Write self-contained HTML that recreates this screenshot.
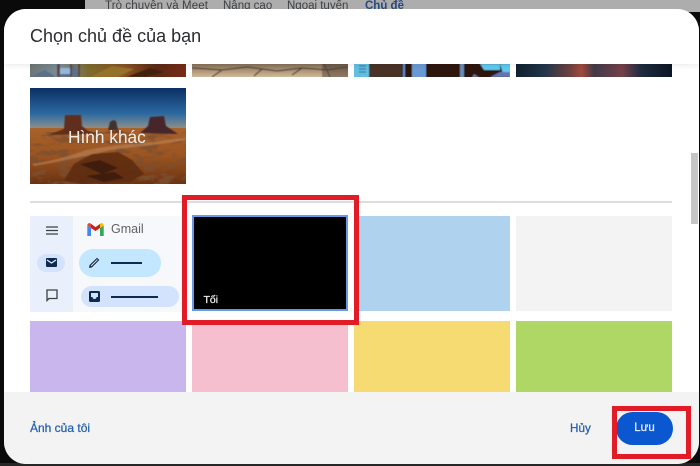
<!DOCTYPE html>
<html lang="vi">
<head>
<meta charset="utf-8">
<title>Chọn chủ đề của bạn</title>
<style>
html,body{margin:0;padding:0}
body{width:700px;height:466px;position:relative;overflow:hidden;background:#0a0a0a;font-family:"Liberation Sans","Noto Sans CJK JP",sans-serif}
div,span,svg{position:absolute;display:block}
.t{white-space:nowrap}
.m{-webkit-text-stroke:.25px currentColor}
</style>
</head>
<body>
<div style="left:85px;top:0;width:615px;height:12px;background:#adadad"></div>
<div class="t" style="left:105px;top:-1px;font-size:11.500px;line-height:14px;color:#3d4043;letter-spacing:.1px">Trò chuyện và Meet</div>
<div class="t" style="left:223px;top:-1px;font-size:11.500px;line-height:14px;color:#3d4043">Nâng cao</div>
<div class="t" style="left:287px;top:-1px;font-size:11.500px;line-height:14px;color:#3d4043">Ngoại tuyến</div>
<div class="t" style="left:365px;top:-1px;font-size:11.500px;line-height:14px;color:#28497c;font-weight:bold">Chủ đề</div>
<div style="left:0;top:463px;width:700px;height:3px;background:#262626"></div>

<!-- dialog -->
<div style="left:4px;top:9px;width:695px;height:455px;background:#fff;border-radius:22px;overflow:hidden">
  <svg style="left:26px;top:55px" width="156" height="13" viewBox="0 0 156 13">
    <defs>
      <linearGradient id="a" x1="0" x2="1" y1="0" y2="0"><stop offset="0" stop-color="#6b7470"/><stop offset=".2" stop-color="#7c8d9a"/><stop offset=".38" stop-color="#7d6a2c"/><stop offset=".6" stop-color="#8a5424"/><stop offset=".8" stop-color="#5a2a14"/><stop offset="1" stop-color="#7a2d18"/></linearGradient>
      <filter id="b1"><feGaussianBlur stdDeviation=".6"/></filter>
    </defs>
    <g filter="url(#b1)">
      <rect x="-2" y="-2" width="160" height="17" fill="url(#a)"/>
      <path d="M0 13L15 6 26 13ZM28 13L44 0 50 13Z" fill="#5a6f88"/>
      <path d="M27 0h3v13h-3zM40 0h2v13h-2zM48 0h2v13h-2z" fill="#5b4a45"/>
      <path d="M30 4h10v6H30z" fill="#94b8dc"/>
      <path d="M60 13L82 2 104 5 88 13Z" fill="#94722c"/>
      <path d="M96 13L120 4 134 8 116 13Z" fill="#42200f"/>
    </g>
  </svg>
  <svg style="left:188px;top:55px" width="156" height="13" viewBox="0 0 156 13">
    <defs>
      <linearGradient id="bb" x1="0" x2="0" y1="0" y2="1"><stop offset="0" stop-color="#7a6650"/><stop offset=".6" stop-color="#b59d7f"/><stop offset="1" stop-color="#dcc6a8"/></linearGradient>
    </defs>
    <g filter="url(#b1)">
      <rect x="-2" y="-2" width="160" height="17" fill="url(#bb)"/>
      <path d="M0 4L30 6 55 3 85 7 110 4 135 6 156 3M20 13L30 6M62 12L70 5M100 11L110 4M132 0L138 13" stroke="#54432f" stroke-width="1.200" fill="none"/>
      <rect x="130" y="-2" width="28" height="17" fill="#55453a" opacity=".55"/>
    </g>
  </svg>
  <svg style="left:350px;top:55px" width="156" height="13" viewBox="0 0 156 13">
    <g filter="url(#b1)">
      <rect x="-2" y="-2" width="160" height="17" fill="#2d1410"/>
      <rect x="-2" y="-2" width="17" height="17" fill="#62bfe2"/>
      <rect x="15" y="-2" width="33" height="17" fill="#4a3228"/>
      <rect x="49" y="-2" width="2" height="17" fill="#5d8fd0"/>
      <rect x="58" y="-2" width="14" height="17" fill="#6a9ad4"/>
      <rect x="106" y="-2" width="4" height="17" fill="#6a8bb8"/>
      <path d="M126 0h20v6h-16zM146 0h12v13h-8z" fill="#5ec9ef"/>
      <path d="M118 13l2-3 5 3zM136 13h20V8h-10z" fill="#6673b0"/>
      <path d="M5 2h7M5 5h7M5 8h7" stroke="#2a5c86"/>
    </g>
  </svg>
  <svg style="left:512px;top:55px" width="156" height="13" viewBox="0 0 156 13">
    <defs><linearGradient id="c" x1="0" x2="1" y1="0" y2="0"><stop offset="0" stop-color="#10202e"/><stop offset=".18" stop-color="#20364a"/><stop offset=".35" stop-color="#70413f"/><stop offset=".42" stop-color="#a24a3a"/><stop offset=".5" stop-color="#403a48"/><stop offset=".68" stop-color="#74404a"/><stop offset=".8" stop-color="#1f2c40"/><stop offset="1" stop-color="#0b1522"/></linearGradient></defs>
    <rect width="156" height="13" fill="url(#c)"/>
  </svg>

  <!-- Hình khác -->
  <svg style="left:26px;top:79px" width="156" height="96" viewBox="0 0 156 96">
    <defs>
      <linearGradient id="s" x1="0" x2="0" y1="0" y2="1"><stop offset="0" stop-color="#0b2f63"/><stop offset=".6" stop-color="#2a68a0"/><stop offset=".9" stop-color="#7c8a90"/><stop offset="1" stop-color="#a88a6c"/></linearGradient>
      <linearGradient id="g" x1="0" x2="0" y1="0" y2="1"><stop offset="0" stop-color="#a8622c"/><stop offset=".5" stop-color="#9c5420"/><stop offset="1" stop-color="#6a3312"/></linearGradient>
      <filter id="bl"><feGaussianBlur stdDeviation=".6"/></filter>
      <filter id="tx" x="0" y="0" width="100%" height="100%">
        <feTurbulence type="fractalNoise" baseFrequency=".07 .16" numOctaves="3" seed="4"/>
        <feColorMatrix values="0 0 0 0 .2  0 0 0 0 .08  0 0 0 0 .03  0 0 0 -5 2.700"/>
      </filter>
    </defs>
    <rect width="156" height="42" fill="url(#s)"/>
    <rect y="40" width="156" height="56" fill="url(#g)"/>
    <rect y="44" width="156" height="52" filter="url(#tx)" opacity=".8"/>
    <g filter="url(#bl)">
      <path d="M18 47L34 41 35 27 51 27 52 38 58 43 68 46Z" fill="#5e2e1e"/>
      <path d="M78 42L80 34 83 32 86 33 88 42Z" fill="#42302e"/>
      <path d="M110 45L118 38 120 29 134 28 136 38 148 46Z" fill="#46282a"/>
      <path d="M72 45L88 42 96 45Z" fill="#6b3a20"/>
      <path d="M2 76Q30 72 56 62 90 56 126 54 140 51 156 50L156 52Q120 58 80 62 50 70 4 78Z" fill="#c49064" opacity=".5"/>
      <path d="M34 92L44 76 62 66 88 64 102 72 114 86 100 94 50 96Z" fill="#5c2a12" opacity=".85"/>
      <path d="M50 76l20-4 18 8-16 6zM56 88l28-4 10 6-20 4z" fill="#3f1b0c"/>
    </g>
  </svg>
  <div class="t" style="left:64px;top:117px;font-size:17.300px;line-height:22px;color:#f2eeea">Hình khác</div>

  <div style="left:26px;top:192px;width:642px;height:1.500px;background:#dddddd"></div>

  <!-- Gmail tile -->
  <div style="left:26px;top:207px;width:156px;height:96px;background:#f6f8fc"></div>
  <div style="left:26px;top:207px;width:43px;height:96px;background:#e9f0fb"></div>
  <svg style="left:42px;top:217px" width="12" height="9" viewBox="0 0 12 9"><path d="M0 1h12M0 4.500h12M0 8h12" stroke="#3c4043" stroke-width="1.300"/></svg>
  <div style="left:33px;top:245px;width:28px;height:18px;border-radius:9px;background:#d3e3fd"></div>
  <svg style="left:42px;top:249px" width="11" height="9" viewBox="0 0 11 9"><rect width="11" height="9" rx="1" fill="#0d2a55"/><path d="M1 2l4.500 3L10 2" stroke="#e6eefb" stroke-width="1.300" fill="none"/></svg>
  <svg style="left:42px;top:280px" width="12" height="13" viewBox="0 0 12 13"><path d="M1 1h10v8.500H3L1 11.500Z" stroke="#3c4043" stroke-width="1.300" fill="none"/></svg>
  <svg style="left:82px;top:213px" width="19" height="15" viewBox="0 0 19 15">
    <path d="M1.300 14V3.500L5 6v8z" fill="#4285f4"/>
    <path d="M17.700 14V3.500L14 6v8z" fill="#34a853"/>
    <path d="M1.300 3.500C1.300 1 3.500.500 5 1.700L9.500 5.300V9L1.300 3.500Z" fill="#ea4335"/>
    <path d="M9.500 5.300L14 1.700C15.500.500 17.700 1 17.700 3.500L14 6 9.500 9Z" fill="#fbbc04"/>
    <path d="M5 2v4l4.500 3 4.500-3V2L9.500 5.300Z" fill="#c5221f"/>
  </svg>
  <div class="t" style="left:107px;top:212px;font-size:12.500px;line-height:16px;color:#5f6368">Gmail</div>
  <div style="left:75px;top:240px;width:82px;height:28px;border-radius:14px;background:#c2e7ff"></div>
  <svg style="left:84px;top:247px" width="13" height="13" viewBox="0 0 13 13"><path d="M1 12l.6-3L9 1.700 11.300 4 4 11.400Z" fill="#1f2a3a"/><path d="M2.800 10.300L3 9.300 9 3.300l.7.700L3.700 10Z" fill="#c2e7ff"/></svg>
  <div style="left:107px;top:253px;width:31px;height:1.500px;background:#0d2a55"></div>
  <div style="left:77px;top:277px;width:98px;height:21px;border-radius:11px;background:#d3e3fd"></div>
  <svg style="left:85px;top:282px" width="11" height="11" viewBox="0 0 11 11"><rect width="11" height="11" rx="1.500" fill="#0d2a55"/><path d="M2 2h7v4H7.500a2 2 0 0 1-4 0H2Z" fill="#d3e3fd"/></svg>
  <div style="left:107px;top:287px;width:47px;height:1.500px;background:#0d2a55"></div>

  <!-- Dark tile -->
  <div style="left:188px;top:206px;width:152px;height:92px;background:#000;border:2px solid #659aea"></div>
  <div class="t m" style="left:199.500px;top:285px;font-size:10.500px;line-height:13px;color:#f0f0f0">Tối</div>

  <div style="left:350px;top:207px;width:156px;height:95px;background:#afd2ef"></div>
  <div style="left:512px;top:207px;width:156px;height:95px;background:#f3f3f3"></div>
  <div style="left:26px;top:312px;width:156px;height:72px;background:#c9b6ec"></div>
  <div style="left:188px;top:312px;width:156px;height:72px;background:#f5bfd0"></div>
  <div style="left:350px;top:312px;width:156px;height:72px;background:#f6da72"></div>
  <div style="left:512px;top:312px;width:156px;height:72px;background:#aed766"></div>

  <!-- scrollbar -->
  <div style="left:687px;top:144px;width:7px;height:71px;background:#c6c6c6"></div>

  <!-- header -->
  <div style="left:0;top:0;width:695px;height:55px;background:#fff;box-shadow:0 2px 5px rgba(0,0,0,.07)"></div>
  <div class="t" style="left:26px;top:15px;font-size:18px;line-height:24px;color:#2a2c2f">Chọn chủ đề của bạn</div>

  <!-- footer -->
  <div style="left:0;top:383px;width:695px;height:72px;background:#f3f3f3"></div>
  <div class="t m" style="left:26px;top:412px;font-size:12px;line-height:15px;color:#2461ad">Ảnh của tôi</div>
  <div class="t m" style="left:566px;top:412px;font-size:11.700px;line-height:15px;color:#2461ad">Hủy</div>
  <div style="left:612px;top:403px;width:57px;height:33px;border-radius:17px;background:#0b57d0"></div>
  <div class="t m" style="left:612px;top:412px;width:57px;text-align:center;font-size:11.500px;line-height:15px;color:#eaf1fb">Lưu</div>
</div>

<!-- red annotations -->
<div style="left:182px;top:195px;width:167px;height:120px;border:5px solid #e21c27"></div>
<div style="left:612px;top:406px;width:69px;height:43px;border:5.500px solid #e21c27"></div>
</body>
</html>
